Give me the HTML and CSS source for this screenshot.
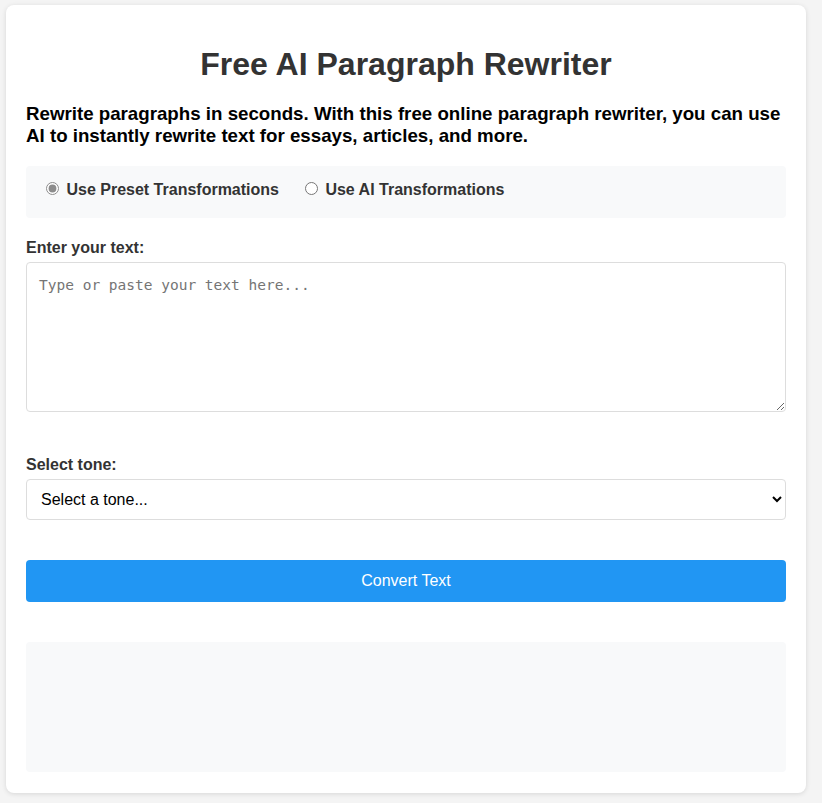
FILE: index.html
```html
<!DOCTYPE html>
<html lang="en">
<head>
<meta charset="utf-8">
<title>Free AI Paragraph Rewriter</title>
<link rel="stylesheet" href="styles.css">
</head>
<body>
<div class="card">
  <h1 class="title">Free AI Paragraph Rewriter</h1>
  <p class="subtitle">Rewrite paragraphs in seconds. With this free online paragraph rewriter, you can use AI to instantly rewrite text for essays, articles, and more.</p>
  <div class="modes">
    <label class="mode"><input type="radio" name="mode" class="radio radio-checked" checked> Use Preset Transformations</label>
    <label class="mode"><input type="radio" name="mode" class="radio"> Use AI Transformations</label>
  </div>
  <div class="group group-text">
    <label class="field-label" for="text">Enter your text:</label>
    <textarea id="text" class="textarea" placeholder="Type or paste your text here..."></textarea>
  </div>
  <div class="group group-tone">
    <label class="field-label" for="tone">Select tone:</label>
    <select id="tone" class="select">
      <option>Select a tone...</option>
    </select>
  </div>
  <button class="convert">Convert Text</button>
  <div class="output"></div>
</div>
</body>
</html>
```

FILE: styles.css
```css
* { box-sizing: border-box; }
html, body { margin: 0; padding: 0; }
body {
  background: #f4f4f4;
  font-family: "Liberation Sans", Arial, sans-serif;
  color: #333;
  padding: 5px 16px 11px 6px;
}
.card {
  background: #fff;
  border-radius: 8px;
  box-shadow: 0 1px 5px rgba(0,0,0,0.12);
  padding: 20px 20px 21px;
  display: flex;
  flex-direction: column;
}
.title {
  font-size: 32px;
  font-weight: bold;
  text-align: center;
  color: #333;
  margin: 21px 0 20px;
}
.subtitle {
  font-size: 18.72px;
  font-weight: bold;
  color: #000;
  margin: 0 0 19px;
  line-height: 22px;
}
.modes {
  background: #f8f9fa;
  border-radius: 4px;
  padding: 13px 15px 19px;
  display: flex;
  gap: 21px;
  margin-bottom: 21px;
}
.mode {
  font-size: 16px;
  font-weight: bold;
  color: #333;
}
.radio { margin: 3px 3px 0 5px; }
.radio-checked { accent-color: #8c8c8c; }
.group { display: flex; flex-direction: column; }
.field-label {
  font-size: 16px;
  font-weight: bold;
  color: #333;
  line-height: 18px;
  margin-bottom: 5px;
}
.textarea {
  height: 150px;
  border: 1px solid #ddd;
  border-radius: 4px;
  padding: 14px 12px 12px;
  font-family: "DejaVu Sans Mono", monospace;
  font-size: 14.5px;
  resize: vertical;
}
.textarea::placeholder { color: #757575; }
.group-tone { margin-top: 44px; }
.select {
  height: 41px;
  border: 1px solid #ddd;
  border-radius: 4px;
  padding: 0 10px;
  font-family: "Liberation Sans", Arial, sans-serif;
  font-size: 16px;
  color: #000;
  background: #fff;
}
.convert {
  margin-top: 40px;
  height: 42px;
  border: 0;
  border-radius: 4px;
  background: #2196f3;
  color: #fff;
  font-family: "Liberation Sans", Arial, sans-serif;
  font-size: 16px;
}
.output {
  margin-top: 40px;
  height: 130px;
  background: #f8f9fa;
  border-radius: 4px;
}
```
